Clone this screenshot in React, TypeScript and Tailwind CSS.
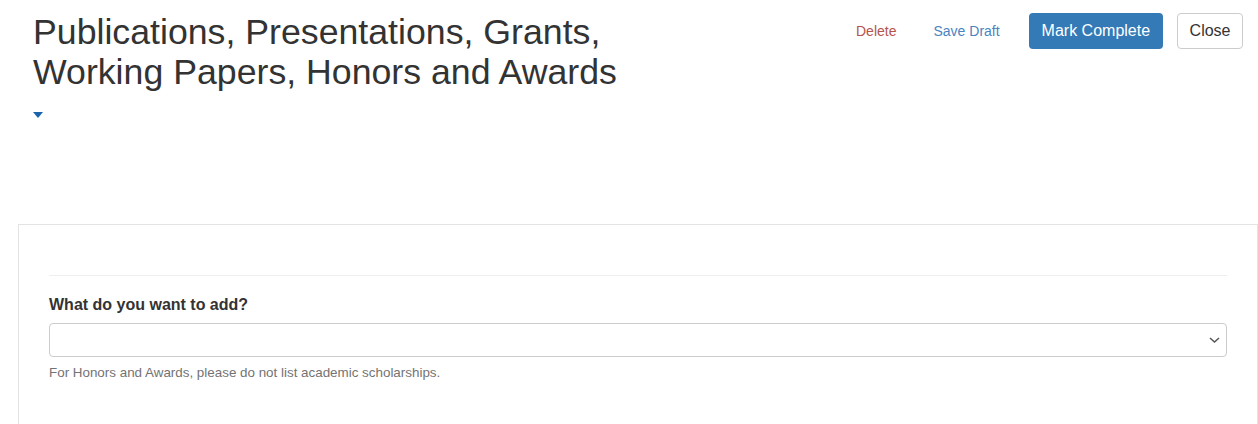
const font = { fontFamily: '"Liberation Sans", Arial, sans-serif' };

export default function App() {
  return (
    <div className="min-h-screen bg-white text-[#333] text-[14px]" style={font}>
      <div className="flex items-start justify-between pl-[33px] pr-[15px]">
        <div>
          <h1 className="mt-[13px] text-[35.7px] leading-[39.6px] font-normal">
            Publications, Presentations, Grants,
            <br />
            Working Papers, Honors and Awards
          </h1>
          <svg className="block mt-[20px]" width="10" height="6" viewBox="0 0 10 6">
            <path d="M0 0h10L5 6z" fill="#1a64ad" />
          </svg>
        </div>
        <div className="mt-[13px] flex items-center">
          <button className="px-[12px] h-[36px] text-[14px] text-[#b5544c]">Delete</button>
          <button className="ml-[13px] px-[12px] h-[36px] text-[14px] text-[#4a84bf]">Save Draft</button>
          <button className="ml-[17px] px-[13px] h-[36px] rounded-[4px] bg-[#337ab7] text-white text-[16px]">
            Mark Complete
          </button>
          <button className="ml-[14px] px-[11.5px] h-[36px] rounded-[4px] border border-[#ccc] text-[16px] text-[#333]">
            Close
          </button>
        </div>
      </div>

      <div className="ml-[18px] mt-[106px] border border-b-0 border-[#e3e3e3] px-[30px] pt-[50px] pb-[60px]">
        <div className="border-t border-[#eee]" />
        <label className="block mt-[17px] mb-[6px] text-[16px] leading-[24px] font-bold text-[#333]">
          What do you want to add?
        </label>
        <div className="relative">
          <select className="w-full h-[34px] rounded-[4px] border border-[#ccc] bg-white px-3 appearance-none" />
          <svg
            className="pointer-events-none absolute right-[7px] top-[14px]"
            width="11"
            height="6"
            viewBox="0 0 11 6"
          >
            <path d="M1 1l4.5 4L10 1" stroke="#555" strokeWidth="1.5" fill="none" />
          </svg>
        </div>
        <p className="mt-[6px] text-[13.4px] leading-[20px] text-[#737373]">
          For Honors and Awards, please do not list academic scholarships.
        </p>
      </div>
    </div>
  );
}
